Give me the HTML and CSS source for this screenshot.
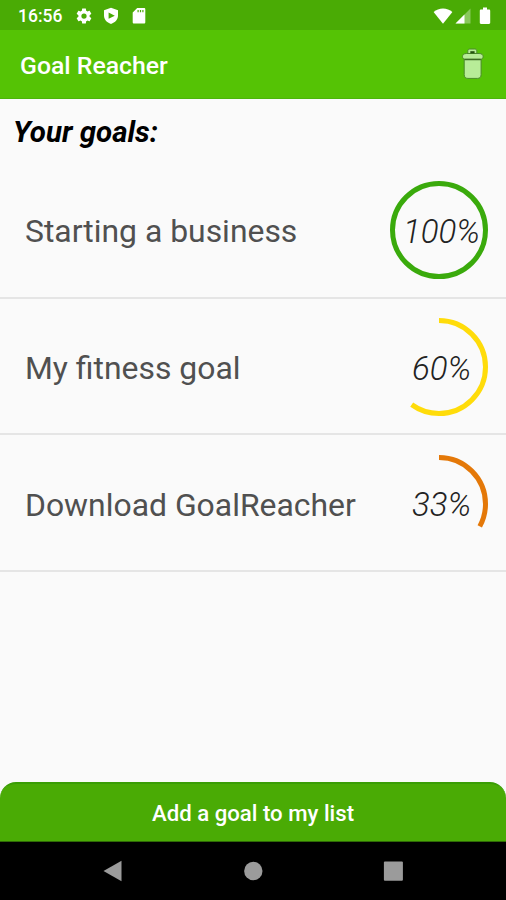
FILE: index.html
```html
<!DOCTYPE html>
<html lang="en">
<head>
  <meta charset="UTF-8" />
  <meta name="viewport" content="width=device-width, initial-scale=1.0"/>
  <title>Goal Reacher</title>
  <link rel="stylesheet" href="styles.css">
</head>
<body>

<!-- Status bar -->
<div class="status-bar">
  <span class="clock">16:56</span>
  <svg class="gear" width="18" height="18" viewBox="0 0 24 24"><path d="M19.43 12.98c.04-.32.07-.64.07-.98s-.03-.66-.07-.98l2.11-1.65c.19-.15.24-.42.12-.64l-2-3.46c-.12-.22-.39-.3-.61-.22l-2.49 1c-.52-.4-1.08-.73-1.69-.98l-.38-2.65C14.46 2.18 14.25 2 14 2h-4c-.25 0-.46.18-.49.42l-.38 2.65c-.61.25-1.17.59-1.69.98l-2.49-1c-.23-.09-.49 0-.61.22l-2 3.46c-.13.22-.07.49.12.64l2.11 1.65c-.04.32-.07.65-.07.98s.03.66.07.98l-2.11 1.65c-.19.15-.24.42-.12.64l2 3.46c.12.22.39.3.61.22l2.49-1c.52.4 1.08.73 1.69.98l.38 2.65c.03.24.24.42.49.42h4c.25 0 .46-.18.49-.42l.38-2.65c.61-.25 1.17-.59 1.69-.98l2.49 1c.23.09.49 0 .61-.22l2-3.46c.12-.22.07-.49-.12-.64l-2.11-1.65zM12 15.5a3.5 3.5 0 1 1 0-7 3.5 3.5 0 0 1 0 7z"/></svg>
  <svg class="shield" width="16" height="18" viewBox="0 0 16 18"><path fill-rule="evenodd" d="M8 .8l7 2.500v5.200c0 4-2.800 7-7 8.400-4.200-1.400-7-4.400-7-8.400V3.300zM5.600 5.600v6.200L11.800 8.700z"/></svg>
  <svg class="sd-card" width="14" height="18" viewBox="0 0 14 18"><path fill-rule="evenodd" d="M5.200 1h6.800c.8 0 1.300.5 1.300 1.300v12.900c0 .8-.5 1.300-1.300 1.300H2c-.8 0-1.300-.5-1.300-1.300V5.500zM5.500 3v2.200h1.200V3zM7.900 3v2.200h1.200V3zM10.300 3v2.200h1.200V3z"/></svg>
  <div class="signals">
    <svg width="20" height="18" viewBox="0 0 20 18"><path d="M10 16.800L.6 5C3.200 2.800 6.500 1.600 10 1.600s6.800 1.200 9.400 3.400z"/></svg>
    <svg width="16" height="18" viewBox="0 0 16 18"><path opacity=".35" d="M15.500 1.500v15H.5z"/><path d="M9.500 7.500v9h-9z"/></svg>
    <svg class="battery" width="12" height="18" viewBox="0 0 12 18"><path d="M4 .5h4v2h2c.7 0 1.200.5 1.200 1.200v12c0 .7-.5 1.200-1.200 1.200H2c-.7 0-1.200-.5-1.200-1.200v-12C.8 3 1.300 2.500 2 2.500h2z"/></svg>
  </div>
</div>

<!-- App bar -->
<header class="app-bar">
  <h1>Goal Reacher</h1>
  <svg class="trash" width="24" height="32" viewBox="0 0 24 32">
    <path d="M6.800 6V3.200c0-1.400.7-2.200 2-2.200h5c1.300 0 2 .8 2 2.200V6z"/>
    <path d="M3.200 10.500h16.900v16c0 2.600-1.200 3.900-3.700 3.900H6.900c-2.500 0-3.700-1.300-3.700-3.900z"/>
    <path d="M5.500 5.500h12.600c2.700 0 4 1.300 4 3.100 0 1.600-1 2.700-2.800 2.700H4.300c-1.800 0-2.800-1.100-2.800-2.700 0-1.800 1.300-3.100 4-3.100z"/>
    <path class="trash-rim" d="M3.500 11.500h16.300"/>
    <path class="trash-knob" d="M9.300 4.300h4.300"/>
  </svg>
</header>

<main>
  <h2>Your goals:</h2>
  <ul class="goal-list">
    <li class="goal">
      <span class="goal-name">Starting a business</span>
      <div class="progress">
        <svg width="98" height="98" viewBox="0 0 98 98"><circle class="ring done" cx="49" cy="49" r="46.500" pathLength="100" stroke-dasharray="100 0"/></svg>
        <span class="percent">100%</span>
      </div>
    </li>
    <li class="goal">
      <span class="goal-name">My fitness goal</span>
      <div class="progress">
        <svg width="98" height="98" viewBox="0 0 98 98"><circle class="ring medium" cx="49" cy="49" r="46.500" pathLength="100" stroke-dasharray="60 100"/></svg>
        <span class="percent">60%</span>
      </div>
    </li>
    <li class="goal">
      <span class="goal-name">Download GoalReacher</span>
      <div class="progress">
        <svg width="98" height="98" viewBox="0 0 98 98"><circle class="ring low" cx="49" cy="49" r="46.500" pathLength="100" stroke-dasharray="33 100"/></svg>
        <span class="percent">33%</span>
      </div>
    </li>
  </ul>
</main>

<button class="add-btn">Add a goal to my list</button>

<!-- Navigation bar -->
<nav class="nav-bar">
  <svg width="20" height="22" viewBox="0 0 20 22"><path d="M18.500.7v20.600L.5 11z"/></svg>
  <svg width="20" height="22" viewBox="0 0 20 22"><circle cx="10.300" cy="11" r="9.200"/></svg>
  <svg width="20" height="22" viewBox="0 0 20 22"><rect x=".9" y="1.500" width="19" height="19.200" rx="1"/></svg>
</nav>

</body>
</html>
```
FILE: styles.css
```css
:root {
  --bar: #55c305;
  --bar-dark: #4aab05;
  --bg: #fafafa;
}

* {
  box-sizing: border-box;
}

body {
  margin: 0;
  height: 900px;
  display: flex;
  flex-direction: column;
  font-family: Roboto, sans-serif;
  background-color: var(--bg);
  overflow: hidden;
}

svg {
  display: block;
  flex: none;
}

.status-bar {
  height: 30px;
  padding: 1px 15px 0 18px;
  display: flex;
  align-items: center;
  background-color: var(--bar-dark);
  color: #fff;
  fill: #fff;
}

.clock {
  width: 57px;
  font-size: 17.5px;
  font-weight: 500;
}

.shield {
  margin-left: 10px;
}

.sd-card {
  margin-left: 13px;
}

.signals {
  display: flex;
  margin-left: auto;
  gap: 2px;
}

.battery {
  margin-left: 6px;
}

.app-bar {
  height: 69px;
  padding: 2px 21px 0 20px;
  display: flex;
  align-items: center;
  justify-content: space-between;
  background-color: var(--bar);
  border-bottom: 1px solid #4cb50a;
}

.app-bar h1 {
  margin: 0;
  color: #fff;
  font-size: 24.8px;
  font-weight: 500;
}

.trash {
  margin-top: -3px;
  fill: #b8ec98;
  stroke: #4b8a2a;
  stroke-width: 1;
}

.trash-rim {
  stroke: #3d6b24;
  stroke-width: 1.5;
}

.trash-knob {
  stroke: #24520f;
  stroke-width: 2.2;
}

main {
  flex: 1;
}

h2 {
  margin: 0;
  height: 63px;
  padding: 16px 13px 0;
  font-size: 29.5px;
  line-height: 34px;
  font-weight: 700;
  font-style: italic;
  color: #000;
}

.goal-list {
  margin: 0;
  padding: 0;
  list-style: none;
}

.goal {
  height: 136.7px;
  padding: 2px 18px 0 25px;
  display: flex;
  align-items: center;
  justify-content: space-between;
  border-bottom: 2px solid #e5e5e5;
}

.goal-name {
  padding-top: 2px;
  font-size: 31.9px;
  font-weight: 400;
  color: #505050;
}

.progress {
  width: 98px;
  height: 98px;
  display: grid;
  place-items: center;
}

.progress > * {
  grid-area: 1 / 1;
}

.ring {
  fill: none;
  stroke-width: 5;
  transform: rotate(-90deg);
  transform-origin: center;
}

.done {
  stroke: #3aaa0c;
}

.medium {
  stroke: #ffdc0a;
}

.low {
  stroke: #e47808;
}

.percent {
  padding: 2px 0 0 5px;
  font-size: 33px;
  font-weight: 300;
  font-style: italic;
  color: #222;
}

.add-btn {
  height: 60px;
  padding: 1px 0 0;
  border: none;
  border-top: 2px solid #3a9d05;
  border-bottom: 1px solid #2f6b05;
  border-radius: 16px 16px 0 0;
  background-color: var(--bar-dark);
  color: #fff;
  font-family: inherit;
  font-size: 22.2px;
  font-weight: 500;
}

.nav-bar {
  height: 58px;
  display: flex;
  align-items: center;
  justify-content: center;
  gap: 120px;
  background-color: #000;
  fill: #9b9b9b;
}
```
